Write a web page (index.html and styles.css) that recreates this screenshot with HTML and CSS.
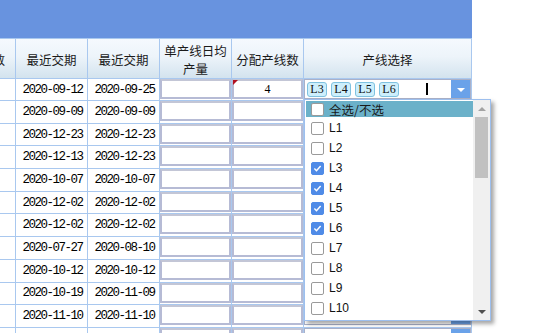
FILE: index.html
```html
<!DOCTYPE html>
<html lang="zh">
<head>
<meta charset="utf-8">
<title>产线选择</title>
<link rel="stylesheet" href="styles.css">
</head>
<body>
<div class="topbar"></div>
<div class="grid">
  <div class="row head">
    <div class="cell cut"><span>数</span></div>
    <div class="cell">最近交期</div>
    <div class="cell">最近交期</div>
    <div class="cell">单产线日均<br>产量</div>
    <div class="cell">分配产线数</div>
    <div class="cell">产线选择</div>
  </div>
  <div class="row first">
    <div class="cell"></div>
    <div class="cell date">2020-09-12</div>
    <div class="cell date">2020-09-25</div>
    <div class="cell incell"><div class="box"></div></div>
    <div class="cell incell"><div class="box num mark">4</div></div>
    <div class="cell incell">
      <div class="combo">
        <div class="tags">
          <span class="tag">L3</span><span class="tag">L4</span><span class="tag">L5</span><span class="tag">L6</span><span class="caret"></span>
        </div>
        <div class="btn"><span class="tri"></span></div>
      </div>
    </div>
  </div>
  <div class="row"><div class="cell"></div><div class="cell date">2020-09-09</div><div class="cell date">2020-09-09</div><div class="cell incell"><div class="box"></div></div><div class="cell incell"><div class="box"></div></div><div class="cell incell"><div class="combo"><div class="tags"></div><div class="btn"><span class="tri"></span></div></div></div></div>
  <div class="row"><div class="cell"></div><div class="cell date">2020-12-23</div><div class="cell date">2020-12-23</div><div class="cell incell"><div class="box"></div></div><div class="cell incell"><div class="box"></div></div><div class="cell incell"><div class="combo"><div class="tags"></div><div class="btn"><span class="tri"></span></div></div></div></div>
  <div class="row"><div class="cell"></div><div class="cell date">2020-12-13</div><div class="cell date">2020-12-23</div><div class="cell incell"><div class="box"></div></div><div class="cell incell"><div class="box"></div></div><div class="cell incell"><div class="combo"><div class="tags"></div><div class="btn"><span class="tri"></span></div></div></div></div>
  <div class="row"><div class="cell"></div><div class="cell date">2020-10-07</div><div class="cell date">2020-10-07</div><div class="cell incell"><div class="box"></div></div><div class="cell incell"><div class="box"></div></div><div class="cell incell"><div class="combo"><div class="tags"></div><div class="btn"><span class="tri"></span></div></div></div></div>
  <div class="row"><div class="cell"></div><div class="cell date">2020-12-02</div><div class="cell date">2020-12-02</div><div class="cell incell"><div class="box"></div></div><div class="cell incell"><div class="box"></div></div><div class="cell incell"><div class="combo"><div class="tags"></div><div class="btn"><span class="tri"></span></div></div></div></div>
  <div class="row"><div class="cell"></div><div class="cell date">2020-12-02</div><div class="cell date">2020-12-02</div><div class="cell incell"><div class="box"></div></div><div class="cell incell"><div class="box"></div></div><div class="cell incell"><div class="combo"><div class="tags"></div><div class="btn"><span class="tri"></span></div></div></div></div>
  <div class="row"><div class="cell"></div><div class="cell date">2020-07-27</div><div class="cell date">2020-08-10</div><div class="cell incell"><div class="box"></div></div><div class="cell incell"><div class="box"></div></div><div class="cell incell"><div class="combo"><div class="tags"></div><div class="btn"><span class="tri"></span></div></div></div></div>
  <div class="row"><div class="cell"></div><div class="cell date">2020-10-12</div><div class="cell date">2020-10-12</div><div class="cell incell"><div class="box"></div></div><div class="cell incell"><div class="box"></div></div><div class="cell incell"><div class="combo"><div class="tags"></div><div class="btn"><span class="tri"></span></div></div></div></div>
  <div class="row"><div class="cell"></div><div class="cell date">2020-10-19</div><div class="cell date">2020-11-09</div><div class="cell incell"><div class="box"></div></div><div class="cell incell"><div class="box"></div></div><div class="cell incell"><div class="combo"><div class="tags"></div><div class="btn"><span class="tri"></span></div></div></div></div>
  <div class="row"><div class="cell"></div><div class="cell date">2020-11-10</div><div class="cell date">2020-11-10</div><div class="cell incell"><div class="box"></div></div><div class="cell incell"><div class="box"></div></div><div class="cell incell"><div class="combo"><div class="tags"></div><div class="btn"><span class="tri"></span></div></div></div></div>
  <div class="row"><div class="cell"></div><div class="cell"></div><div class="cell"></div><div class="cell incell"><div class="box"></div></div><div class="cell incell"><div class="box"></div></div><div class="cell incell"><div class="combo"><div class="tags"></div><div class="btn"><span class="tri"></span></div></div></div></div>
</div>

<div class="dropdown">
  <div class="list">
    <div class="item top"><div class="hl"><span class="cb"></span><span class="lbl cjk">全选/不选</span></div></div>
    <div class="item"><span class="cb"></span><span class="lbl">L1</span></div>
    <div class="item"><span class="cb"></span><span class="lbl">L2</span></div>
    <div class="item"><span class="cb on"><svg viewBox="0 0 13 13"><path d="M2.8 6.6 L5.3 9.1 L10.2 3.6"/></svg></span><span class="lbl">L3</span></div>
    <div class="item"><span class="cb on"><svg viewBox="0 0 13 13"><path d="M2.8 6.6 L5.3 9.1 L10.2 3.6"/></svg></span><span class="lbl">L4</span></div>
    <div class="item"><span class="cb on"><svg viewBox="0 0 13 13"><path d="M2.8 6.6 L5.3 9.1 L10.2 3.6"/></svg></span><span class="lbl">L5</span></div>
    <div class="item"><span class="cb on"><svg viewBox="0 0 13 13"><path d="M2.8 6.6 L5.3 9.1 L10.2 3.6"/></svg></span><span class="lbl">L6</span></div>
    <div class="item"><span class="cb"></span><span class="lbl">L7</span></div>
    <div class="item"><span class="cb"></span><span class="lbl">L8</span></div>
    <div class="item"><span class="cb"></span><span class="lbl">L9</span></div>
    <div class="item"><span class="cb"></span><span class="lbl">L10</span></div>
  </div>
  <div class="sbar">
    <div class="sb-btn"><span class="arr-up"></span></div>
    <div class="thumb"></div>
    <div class="sb-space"></div>
    <div class="sb-btn"><span class="arr-down"></span></div>
  </div>
</div>
</body>
</html>
```
FILE: styles.css
```css
* { box-sizing: border-box; }
html, body { margin: 0; padding: 0; }
body {
  width: 534px;
  height: 333px;
  overflow: hidden;
  position: relative;
  background: #fff;
  font-family: "Noto Sans CJK SC", sans-serif;
}
.topbar {
  width: 472px;
  height: 38px;
  background: #6893df;
}
.grid { width: 472px; }
.row {
  display: grid;
  grid-template-columns: 16px 72px 72px 72px 72px 168px;
  height: 22.7px;
  border-bottom: 1px solid #a9c8ef;
}
.row.first { height: 22px; }
.cell {
  border-right: 1px solid #a9c8ef;
  display: flex;
  align-items: center;
  justify-content: center;
  overflow: hidden;
  min-width: 0;
}
.head {
  height: 41px;
  border-top: 1px solid #a9c8ef;
  background: linear-gradient(#f5f9fe 0%, #edf4fa 45%, #d3e3ee 100%);
  font-size: 12.5px;
  color: #1b1b1b;
}
.head .cell { text-align: center; line-height: 18px; padding-top: 2px; }
.head .cut { justify-content: flex-start; }
.head .cut span { margin-left: -7.5px; }
.date {
  font-family: "Liberation Mono", monospace;
  font-size: 12.5px;
  letter-spacing: -1.5px;
  color: #000;
  padding-left: 2px;
}
.incell { align-items: flex-start; }
.box {
  width: 100%;
  height: 20px;
  background: #fff;
  border: 2px solid #b6bbd5;
  border-top-color: #c3c6d6;
}
.num {
  position: relative;
  display: flex;
  align-items: center;
  justify-content: center;
  font-family: "Liberation Serif", serif;
  font-size: 12px;
  color: #000;
}
.mark::before {
  content: "";
  position: absolute;
  left: -1px;
  top: -1px;
  border-top: 5px solid #b01020;
  border-right: 5px solid transparent;
}
.combo {
  width: 100%;
  height: 20px;
  border: 1px solid #aab1c9;
  background: #fff;
  display: flex;
}
.tags {
  flex: 1;
  display: flex;
  align-items: center;
  gap: 4px;
  padding-left: 2px;
}
.tag {
  width: 20px;
  height: 15px;
  border: 1px solid #7fc2e0;
  border-radius: 3px;
  background: #cdeffc;
  font-family: "Liberation Serif", serif;
  font-size: 12px;
  line-height: 13px;
  text-align: center;
  color: #111;
}
.caret {
  width: 1.5px;
  height: 12px;
  background: #000;
  margin-left: 23px;
}
.btn {
  width: 19px;
  background: #6aa2e9;
  display: flex;
  align-items: center;
  justify-content: center;
}
.tri {
  width: 0;
  height: 0;
  border-left: 4px solid transparent;
  border-right: 4px solid transparent;
  border-top: 4px solid #fff;
  margin-top: 1px;
}
.dropdown {
  position: absolute;
  left: 304px;
  top: 99px;
  width: 187px;
  height: 222px;
  border: 1px solid #9dbfee;
  background: #fff;
  display: flex;
  box-shadow: 3px 3px 4px rgba(0, 0, 0, 0.35);
}
.list { width: 168px; }
.item {
  height: 20px;
  display: flex;
  align-items: center;
  padding-left: 6px;
  font-family: "Liberation Sans", sans-serif;
  font-size: 12px;
  color: #111;
}
.item.top { height: 18px; padding: 1px 0 1px 1px; }
.hl {
  flex: 1;
  height: 16px;
  background: #6bb1c9;
  display: flex;
  align-items: center;
  padding-left: 5px;
}
.cb {
  flex: none;
  width: 13px;
  height: 13px;
  border: 1px solid #9a9a9a;
  border-radius: 2px;
  background: #fff;
  margin-right: 5px;
  display: flex;
}
.cb.on { background: #4f8be7; border-color: #4f8be7; }
.cb svg { width: 11px; height: 11px; }
.cb path { fill: none; stroke: #fff; stroke-width: 1.7; }
.lbl.cjk { font-family: "Noto Sans CJK SC", sans-serif; font-size: 12.5px; color: #1a1a1a; }
.sbar {
  width: 17px;
  background: #f0f0f0;
  display: flex;
  flex-direction: column;
}
.sb-btn {
  height: 17px;
  display: flex;
  align-items: center;
  justify-content: center;
}
.arr-up {
  border-left: 4px solid transparent;
  border-right: 4px solid transparent;
  border-bottom: 4px solid #a3a3a3;
}
.arr-down {
  border-left: 4px solid transparent;
  border-right: 4px solid transparent;
  border-top: 4px solid #505050;
}
.thumb {
  height: 61px;
  margin: 0 2px;
  background: #c1c1c1;
}
.sb-space { flex: 1; }
```
